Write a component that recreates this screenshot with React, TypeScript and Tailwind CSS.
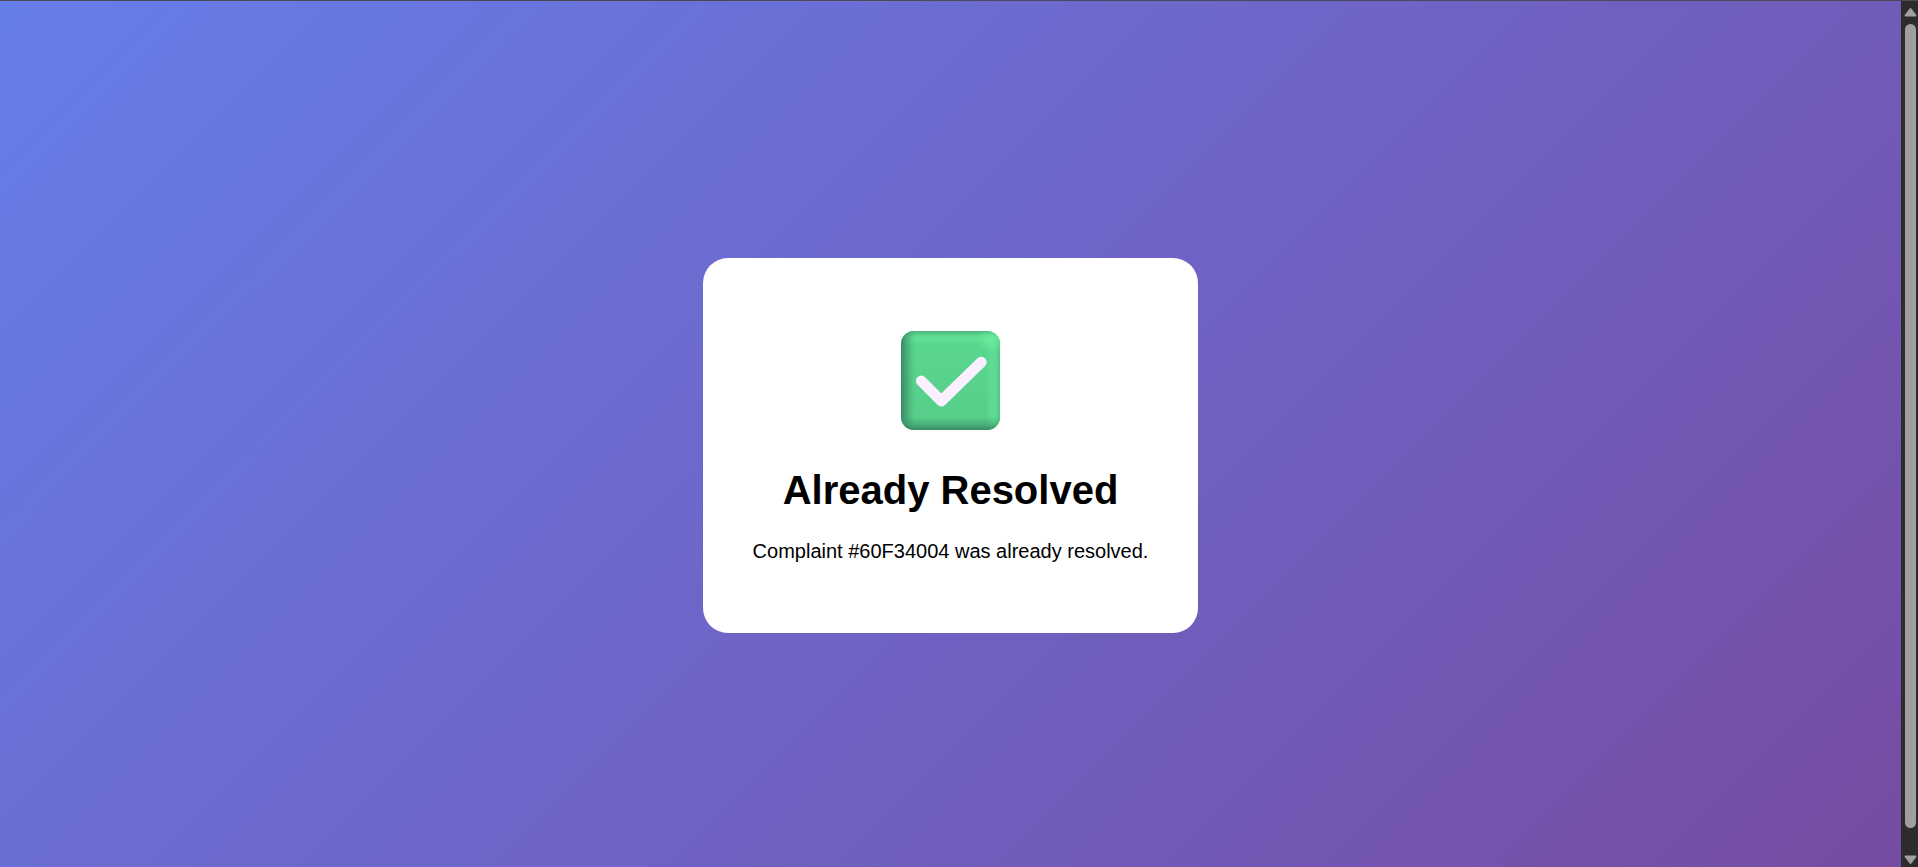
function CheckBadge() {
    return (
        <svg className="h-[99px] w-[99px]" viewBox="0 0 99 99" role="img" aria-label="Resolved">
            <defs>
                <linearGradient id="base" x1="0" y1="0" x2="0" y2="1">
                    <stop offset="0" stopColor="#5ad88f" />
                    <stop offset="1" stopColor="#56cd8a" />
                </linearGradient>
                <linearGradient id="left" x1="0" y1="0" x2="1" y2="0">
                    <stop offset="0" stopColor="#37805f" stopOpacity="0.9" />
                    <stop offset="0.4" stopColor="#3a8a66" stopOpacity="0.55" />
                    <stop offset="1" stopColor="#3f9a70" stopOpacity="0" />
                </linearGradient>
                <linearGradient id="bottom" x1="0" y1="1" x2="0" y2="0">
                    <stop offset="0" stopColor="#37805f" stopOpacity="0.9" />
                    <stop offset="0.4" stopColor="#3a8a66" stopOpacity="0.5" />
                    <stop offset="1" stopColor="#3f9a70" stopOpacity="0" />
                </linearGradient>
                <linearGradient id="right" x1="1" y1="0" x2="0" y2="0">
                    <stop offset="0" stopColor="#52c384" />
                    <stop offset="0.25" stopColor="#5bd78f" />
                    <stop offset="0.6" stopColor="#60df96" stopOpacity="0.8" />
                    <stop offset="1" stopColor="#60df96" stopOpacity="0" />
                </linearGradient>
                <linearGradient id="top" x1="0" y1="0" x2="0" y2="1">
                    <stop offset="0" stopColor="#4cb37c" />
                    <stop offset="0.25" stopColor="#58cf8a" />
                    <stop offset="0.5" stopColor="#62e198" stopOpacity="0.9" />
                    <stop offset="1" stopColor="#60df96" stopOpacity="0" />
                </linearGradient>
                <radialGradient id="shine" cx="90" cy="9" r="14" gradientUnits="userSpaceOnUse">
                    <stop offset="0" stopColor="#6cf09f" stopOpacity="0.75" />
                    <stop offset="1" stopColor="#6cf09f" stopOpacity="0" />
                </radialGradient>
                <clipPath id="tile">
                    <rect width="99" height="99" rx="13" />
                </clipPath>
            </defs>
            <g clipPath="url(#tile)">
                <rect width="99" height="99" fill="url(#base)" />
                <rect x="85" width="14" height="99" fill="url(#right)" />
                <rect width="99" height="14" fill="url(#top)" />
                <rect width="14" height="99" fill="url(#left)" />
                <rect y="86" width="99" height="13" fill="url(#bottom)" />
                <rect width="99" height="99" fill="url(#shine)" />
            </g>
            <path
                d="M20.3 50 40.3 70 80.3 31.2"
                fill="none"
                stroke="#faf0ff"
                strokeWidth="10.8"
                strokeLinecap="round"
                strokeLinejoin="round"
            />
        </svg>
    );
}

function ScrollTrack() {
    return (
        <div className="flex w-[17px] shrink-0 flex-col items-center bg-[#2c2c2c] pt-1.5 pb-0.5 pl-0.5" aria-hidden="true">
            <svg className="h-[10px] w-[13px]" viewBox="0 0 13 10">
                <path d="M6.5 2 11.5 8.5H1.5Z" fill="#9f9f9f" stroke="#9f9f9f" strokeWidth="2" strokeLinejoin="round" />
            </svg>
            <div className="mt-[7px] mb-[27px] w-[11px] flex-1 rounded-full bg-[#9f9f9f]"></div>
            <svg className="h-[10px] w-[13px]" viewBox="0 0 13 10">
                <path d="M6.5 8 11.5 1.5H1.5Z" fill="#9f9f9f" stroke="#9f9f9f" strokeWidth="2" strokeLinejoin="round" />
            </svg>
        </div>
    );
}

export default function App() {
    return (
        <div className="flex h-screen overflow-hidden border-t border-[#4a4a55] font-['Liberation_Sans',Arial,sans-serif] text-black">
            {/* Page content, slightly taller than the window */}
            <main className="flex min-h-[calc(100vh+22px)] flex-1 items-center justify-center self-start bg-[linear-gradient(135deg,#667eea_0%,#764ba2_100%)]">
                <div className="flex flex-col items-center rounded-[25px] bg-white px-[50px] pt-[73px] pb-[70px] text-center">
                    <CheckBadge />
                    <h1 className="mt-[37px] text-[40px] leading-[46px] font-bold">Already Resolved</h1>
                    <p className="mt-[27px] text-[20px] leading-[23px]">Complaint #60F34004 was already resolved.</p>
                </div>
            </main>

            <ScrollTrack />
        </div>
    );
}
